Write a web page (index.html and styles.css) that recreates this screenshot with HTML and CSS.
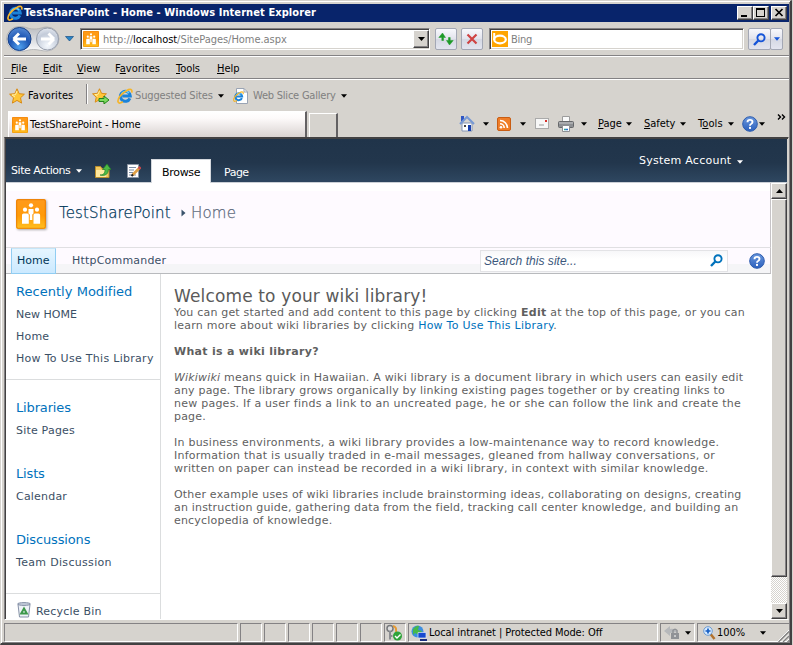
FILE: index.html
```html
<!DOCTYPE html>
<html lang="en">
<head>
<meta charset="utf-8">
<title>TestSharePoint - Home</title>
<link rel="stylesheet" href="styles.css">
</head>
<body>
<svg class="defs" width="0" height="0" aria-hidden="true">
  <defs>
    <linearGradient id="orange" x1="0" y1="0" x2="0" y2="1"><stop offset="0" stop-color="#ff9a1c"/><stop offset=".55" stop-color="#ff9a08"/><stop offset="1" stop-color="#ffc222"/></linearGradient>
    <radialGradient id="blueball" cx=".5" cy=".85" r=".9"><stop offset="0" stop-color="#4fa0ee"/><stop offset=".5" stop-color="#1f57b4"/><stop offset="1" stop-color="#5b8fd8"/></radialGradient>
    <radialGradient id="greyball" cx=".5" cy=".8" r=".9"><stop offset="0" stop-color="#f4f8fd"/><stop offset=".6" stop-color="#c3cbd9"/><stop offset="1" stop-color="#eef2f8"/></radialGradient>
    <linearGradient id="help" x1="0" y1="0" x2="0" y2="1"><stop offset="0" stop-color="#6a97dd"/><stop offset="1" stop-color="#2b60bd"/></linearGradient>
    <linearGradient id="bar" x1="0" y1="0" x2="0" y2="1"><stop offset="0" stop-color="#b9bbbf"/><stop offset=".5" stop-color="#d8dade"/><stop offset="1" stop-color="#fbfbfc"/></linearGradient>
    <symbol id="people" viewBox="0 0 30 30">
      <rect x="0" y="0" width="30" height="30" rx="2" fill="url(#orange)"/>
      <rect x=".7" y=".7" width="28.6" height="28.6" rx="1.5" fill="none" stroke="#e87c05" stroke-width=".9"/>
      <g fill="#fff"><circle cx="15" cy="6.3" r="2.1"/><circle cx="9" cy="10.7" r="2.1"/><circle cx="21" cy="10.7" r="2.1"/>
      <path d="M6 16q0-1.600 1.500-1.600h3.700q1.600 0 1.600 1.600v8.700H6zM17.500 16q0-1.600 1.500-1.600h3.500q1.600 0 1.600 1.600v8.700h-6.600zM12.500 10h5v4.500l-1.200 1v5.500h-2.500v-5.500l-1.300-1z"/></g>
    </symbol>
    <symbol id="ie" viewBox="0 0 16 16">
      <path d="M12.900 10.300A5 5 0 1 1 13.300 8H5.200" fill="none" stroke="#1b83da" stroke-width="3"/>
      <path d="M4.400 6A4.400 4.400 0 0 1 12 5" fill="none" stroke="#6fd0f8" stroke-width="1.300"/>
      <path d="M14.600 4.600C15.700 1.500 13.500.2 9.500 2.700 4.500 5.500-.2 11 1.200 14.200c.8 1.500 3 .7 4.600-.4" fill="none" stroke="#f5b52a" stroke-width="1.700"/>
    </symbol>
    <symbol id="star" viewBox="0 0 16 16"><path d="M8 .8l2.200 4.900 5.200.5-3.900 3.600 1.100 5.300L8 12.400l-4.600 2.700 1.100-5.300L.6 6.200l5.200-.5z" fill="#ffc637" stroke="#d88a16"/><path d="M8 3L6.500 6.700 3 7l3 2" fill="none" stroke="#fff1a8"/></symbol>
    <symbol id="down" viewBox="0 0 7 4"><path d="M0 0h7L3.500 4z" fill="currentColor"/></symbol>
    <symbol id="question" viewBox="0 0 16 16"><circle cx="8" cy="8" r="7.300" fill="url(#help)" stroke="#2d5cae"/><path d="M5.500 6.200q0-2.300 2.500-2.300t2.500 2.100q0 1.200-1.400 2Q8 8.500 8 9.800" fill="none" stroke="#fff" stroke-width="1.900"/><rect x="7" y="10.900" width="2" height="2" fill="#fff"/></symbol>
    <symbol id="lens" viewBox="0 0 13 13"><circle cx="8" cy="4.800" r="3.600" fill="none" stroke="currentColor" stroke-width="1.900"/><path d="M5.300 7.500L1 12" stroke="currentColor" stroke-width="2.400"/></symbol>
  </defs>
</svg>

<div class="window">
  <header class="titlebar">
    <svg class="title-icon" width="16" height="16"><use href="#ie"/></svg>
    <h1 class="title-text">TestSharePoint - Home - Windows Internet Explorer</h1>
    <div class="window-buttons">
      <span class="button3d"><svg width="12" height="10"><path d="M2 7h6v2H2z"/></svg></span>
      <span class="button3d"><svg width="12" height="10"><path d="M1 0h9v9H1zM2 2v6h7V2z" fill-rule="evenodd"/></svg></span>
      <span class="button3d close"><svg width="12" height="10"><path d="M2.500 1l7 7M9.500 1l-7 7" stroke="#000" stroke-width="1.700"/></svg></span>
    </div>
  </header>

  <div class="navbar">
    <svg class="travel" width="59" height="28" viewBox="0 0 59 28">
      <path d="M14 1.500C22 1.500 22 4 29 4S37 2 42 2a12 12 0 0 1 0 24c-6 0-8-1.500-13.500-1.500S21 26.500 14 26.500a12.500 12.500 0 0 1 0-25z" fill="url(#bar)" stroke="#a9abad" stroke-width=".8"/>
      <circle cx="14.500" cy="14" r="11.500" fill="url(#blueball)" stroke="#163f86"/>
      <path d="M8.500 14l5.500-5.500M8.500 14l5.500 5.500M9 14h12" stroke="#fff" stroke-width="2.900" fill="none"/>
      <circle cx="42.500" cy="14" r="11" fill="url(#greyball)" stroke="#969dab"/>
      <path d="M49 14l-5.500-5.500M49 14l-5.500 5.500M48.500 14H36" stroke="#fff" stroke-width="2.900" fill="none"/>
    </svg>
    <svg class="recent" width="9" height="6"><path d="M.5.5h8L4.500 5z" fill="#2a86c8" stroke="#174f86" stroke-width=".7"/></svg>
    <div class="field address">
      <svg width="16" height="16"><use href="#people"/></svg>
      <span class="url">http://<b>localhost</b>/SitePages/Home.aspx</span>
      <span class="button3d combo"><svg width="7" height="4"><use href="#down"/></svg></span>
    </div>
    <span class="toolbutton refresh"><svg width="16" height="14" viewBox="0 0 16 14"><path d="M.8 5.500L4.500 1l3 4.500H5.500v3H3.800v-3zM15.200 8.500L11.500 13l-3-4.500h2v-3h1.700v3z" fill="#1d9a27" stroke="#1d9a27" stroke-width=".5"/><path d="M4.600 6.500q0-3.500 3.400-4M11.400 7.500q0 3.500-3.400 4" fill="none"/></svg></span>
    <span class="toolbutton stop"><svg width="12" height="12"><path d="M1.500 1.500l9 9M10.500 1.500l-9 9" stroke="#cf4343" stroke-width="2.200"/></svg></span>
    <div class="field bing">
      <svg width="16" height="16"><rect width="16" height="16" fill="#ffa500"/><path d="M2.200 2v7" stroke="#fff" stroke-width="2"/><ellipse cx="8" cy="8.500" rx="5.800" ry="3.800" fill="none" stroke="#fff" stroke-width="2.200"/></svg>
      <span>Bing</span>
    </div>
    <span class="toolbutton search-go"><svg width="13" height="13"><use href="#lens"/></svg></span>
    <span class="toolbutton search-menu"><svg width="6" height="4"><use href="#down"/></svg></span>
  </div>

  <nav class="menubar">
    <span class="m-file"><u>F</u>ile</span><span class="m-edit"><u>E</u>dit</span><span class="m-view"><u>V</u>iew</span><span class="m-fav">F<u>a</u>vorites</span><span class="m-tools"><u>T</u>ools</span><span class="m-help"><u>H</u>elp</span>
  </nav>

  <div class="favbar">
    <svg class="fav-star" width="16" height="16"><use href="#star"/></svg>
    <span class="fav-label">Favorites</span>
    <i class="divider"></i>
    <svg class="fav-add" width="18" height="16"><use href="#star" width="15" height="15"/><path d="M7 10.500h5V8l5 4-5 4v-2.500H7z" fill="#7ddb5e" stroke="#23851c"/></svg>
    <svg class="fav-ie" width="16" height="16"><use href="#ie"/></svg>
    <span class="fav-link suggested">Suggested Sites</span>
    <svg class="fav-down" width="6" height="4"><use href="#down"/></svg>
    <svg class="fav-page" width="16" height="16"><path d="M3.500.500H11L14.500 4v11.500h-11z" fill="#fff" stroke="#9aa4b4"/><path d="M11 .500V4h3.500" fill="none" stroke="#9aa4b4"/><use href="#ie" x="0" y="3" width="11" height="11"/></svg>
    <span class="fav-link slices">Web Slice Gallery</span>
    <svg class="fav-down" width="6" height="4"><use href="#down"/></svg>
  </div>

  <div class="tabbar">
    <div class="tab"><svg width="16" height="16"><use href="#people"/></svg><span>TestSharePoint - Home</span></div>
    <div class="newtab"></div>
    <div class="commands">
      <svg class="c-home" width="16" height="17"><path d="M3 8h10v8H3z" fill="#fff" stroke="#8696b4"/><path d="M2 1h3v4L2 7z" fill="#2f55c4"/><path d="M1 9l7-7 7 7" fill="none" stroke="#7799d4" stroke-width="2"/><path d="M9 10h3v6H9z" fill="#173fae"/><path d="M5 10h2v2H5z" fill="#444"/></svg>
      <svg class="c-down d1" width="6" height="4"><use href="#down"/></svg>
      <svg class="c-rss" width="14" height="14"><rect x=".5" y=".5" width="13" height="13" rx="1.500" fill="#ef7d28" stroke="#c95d13"/><g fill="none" stroke="#fff" stroke-width="1.600"><path d="M3 6.800a4.200 4.200 0 0 1 4.200 4.200M3 3.500a7.500 7.500 0 0 1 7.500 7.500"/></g><circle cx="4" cy="10.200" r="1.300" fill="#fff"/></svg>
      <svg class="c-down d2" width="6" height="4"><use href="#down"/></svg>
      <svg class="c-mail" width="14" height="11"><rect x=".5" y=".5" width="13" height="10" fill="#f7f7f7" stroke="#aaa"/><path d="M10 2h2v2h-2z" fill="#d8322c"/><path d="M4 7h5" stroke="#999"/></svg>
      <svg class="c-print" width="16" height="16"><path d="M4.500.500h7V6h-7z" fill="#fafafa" stroke="#9c9c9c"/><rect x=".5" y="5.500" width="15" height="6" rx="1" fill="#8d8f93" stroke="#66686b"/><path d="M1 7h14" stroke="#c8c9cb"/><path d="M4.500 9.500h7v6h-7z" fill="#fff" stroke="#8d8f93"/><path d="M6 13.500h2" stroke="#2fa5a0" stroke-width="1.500"/><path d="M8 13.500h2" stroke="#2b6fd4" stroke-width="1.500"/></svg>
      <svg class="c-down d3" width="6" height="4"><use href="#down"/></svg>
      <span class="c-page"><u>P</u>age</span><svg class="c-down" width="6" height="4"><use href="#down"/></svg>
      <span class="c-safety"><u>S</u>afety</span><svg class="c-down" width="6" height="4"><use href="#down"/></svg>
      <span class="c-tools">T<u>o</u>ols</span><svg class="c-down" width="6" height="4"><use href="#down"/></svg>
      <svg class="c-help" width="16" height="16"><use href="#question"/></svg><svg class="c-down d4" width="6" height="4"><use href="#down"/></svg>
      <svg class="c-more" width="9" height="6"><path d="M1 .500l2.500 2.500L1 5.500M5 .500l2.500 2.500L5 5.500" fill="none" stroke="#000" stroke-width="1.400"/></svg>
    </div>
  </div>

  <div class="viewport">
    <div class="ribbon">
      <span class="site-actions">Site Actions</span>
      <svg class="sa-down" width="6" height="4"><use href="#down"/></svg>
      <svg class="r-up" width="16" height="15"><path d="M.500 3.500h5l1.500 2h7v9H.500z" fill="#f3ca62" stroke="#b98e2c"/><path d="M1 7h11l-1 7H1z" fill="#ffe9a0"/><path d="M5 12c4 0 5-2.500 5-5.500H7.500l4.500-5.500 4 5.500h-2.700c0 4-2.300 7-8.300 5.500z" fill="#4db944" stroke="#20802a" stroke-width=".7"/></svg>
      <svg class="r-edit" width="14" height="14"><path d="M.500.500h11v13H.500z" fill="#fff" stroke="#8c96a5"/><path d="M2 3.500h7M2 6h5M2 8.500h4M2 11h7" stroke="#7c8ca4"/><path d="M5.500 11L13 3.500" stroke="#e0a045" stroke-width="2.600"/><path d="M11.700 4.800L13.500 3" stroke="#c9474d" stroke-width="2.600"/><path d="M4.500 12l1.500-1.500" stroke="#222" stroke-width="2"/></svg>
      <span class="ribbon-tab">Browse</span>
      <span class="ribbon-page">Page</span>
      <span class="account">System Account</span>
      <svg class="acc-down" width="6" height="4"><use href="#down"/></svg>
    </div>
    <div class="scroller">
      <div class="page">
        <div class="site-title">
          <svg class="logo" width="30" height="30"><use href="#people"/></svg>
          <span class="site-name">TestSharePoint</span>
          <svg class="crumb" width="5" height="8"><path d="M.500.500l4 3.500-4 3.500z" fill="#3a536c"/></svg>
          <span class="page-name">Home</span>
        </div>
        <nav class="topnav">
          <a class="home">Home</a>
          <a class="commander">HttpCommander</a>
          <div class="sitesearch"><span>Search this site...</span><svg width="13" height="13"><use href="#lens"/></svg></div>
          <svg class="page-help" width="16" height="16"><use href="#question"/></svg>
        </nav>
        <div class="body">
          <aside class="sidebar">
            <section class="recent-list">
              <h3 class="wide">Recently Modified</h3>
              <a class="new">New HOME</a><a>Home</a><a class="howto">How To Use This Library</a>
            </section>
            <section class="group"><h3>Libraries</h3><a>Site Pages</a></section>
            <section class="group"><h3>Lists</h3><a>Calendar</a></section>
            <section class="group"><h3>Discussions</h3><a class="team">Team Discussion</a></section>
            <div class="recycle">
              <svg width="16" height="16"><path d="M2 2.500l1.500 12.500h9L14 2.500z" fill="#eef2f7" stroke="#8792a8"/><ellipse cx="8" cy="2" rx="6.500" ry="1.400" fill="#c4ccda" stroke="#8691a7"/><path d="M8 6.500l2.800 5H5.200z" fill="none" stroke="#3d984a" stroke-width="2"/></svg>
              <a>Recycle Bin</a>
            </div>
          </aside>
          <main class="content">
            <h2>Welcome to your wiki library!</h2>
            <p>You can get started and add content to this page by clicking <strong>Edit</strong> at the top of this page, or you can<br><span class="loose">learn more about wiki libraries by clicking <a>How To Use This Library</a>.</span></p>
            <p><strong>What is a wiki library?</strong></p>
            <p><em>Wikiwiki</em> means quick in Hawaiian. A wiki library is a document library in which users can easily edit<br>any page. The library grows organically by linking existing pages together or by creating links to<br><span class="loose">new pages. If a user finds a link to an uncreated page, he or she can follow the link and create the</span><br>page.</p>
            <p class="loose">In business environments, a wiki library provides a low-maintenance way to record knowledge.<br>Information that is usually traded in e-mail messages, gleaned from hallway conversations, or<br>written on paper can instead be recorded in a wiki library, in context with similar knowledge.</p>
            <p>Other example uses of wiki libraries include brainstorming ideas, collaborating on designs, creating<br>an instruction guide, gathering data from the field, tracking call center knowledge, and building an<br>encyclopedia of knowledge.</p>
          </main>
        </div>
      </div>
      <div class="scrollbar">
        <span class="button3d sb"><svg width="7" height="4"><path d="M0 4h7L3.500 0z"/></svg></span>
        <span class="button3d thumb"></span>
        <span class="track"></span>
        <span class="button3d sb"><svg width="7" height="4"><use href="#down"/></svg></span>
      </div>
    </div>
  </div>

  <footer class="statusbar">
    <span class="cell message"></span>
    <span class="cell"></span><span class="cell"></span><span class="cell"></span><span class="cell"></span><span class="cell"></span><span class="cell"></span>
    <span class="cell"><svg width="18" height="17"><circle cx="5" cy="4.500" r="3" fill="#ddd" stroke="#77797c" stroke-width="1.500"/><path d="M5 7v8.500M5 12h2.500" stroke="#8b8d91" stroke-width="2"/><path d="M8 2q4 1 3 6" fill="none" stroke="#e69a32" stroke-width="2"/><circle cx="12.500" cy="12" r="4.500" fill="#2fa33a"/><path d="M10 12l2 2 3.500-3.500" fill="none" stroke="#fff" stroke-width="1.400"/></svg></span>
    <span class="cell zone"><svg width="17" height="16"><circle cx="6.500" cy="6.500" r="6" fill="#3d8fe0"/><path d="M2 4q4-4 6-3l-1 4 4 1-3 4-4-2-2 2z" fill="#46b94a"/><path d="M7 7.500h8V13H7z" fill="#174ad0" stroke="#dce5f5" stroke-width=".7"/><path d="M9 15h7" stroke="#1a2e80" stroke-width="2"/></svg><span>Local intranet | Protected Mode: Off</span></span>
    <span class="cell lock"><svg width="17" height="15"><path d="M0 6l6-5v3q5-1 7 3l-7 1v3z" fill="#b6b8bb"/><rect x="7" y="8" width="8" height="6" fill="#909296"/><path d="M9 8V5.500q2-2.500 4 0V8" fill="none" stroke="#909296" stroke-width="1.500"/><path d="M11 10v2" stroke="#fff"/></svg><svg class="st-down" width="6" height="4"><use href="#down"/></svg></span>
    <span class="cell zoom"><svg width="13" height="14"><path d="M7.500 8l4 5" stroke="#b3722d" stroke-width="2.500"/><circle cx="5" cy="5" r="4.300" fill="#d8ebff" stroke="#6b9ad0"/><path d="M5 2.500v5M2.500 5h5" stroke="#145ec4" stroke-width="1.700"/></svg><span>100%</span><svg class="st-down" width="6" height="4"><use href="#down"/></svg><svg class="grip" width="12" height="12"><path d="M0 12L12 0M4.500 12L12 4.500M9 12l3-3" stroke="#fff"/><path d="M1.500 12L12 1.500M6 12l6-6M10.500 12l1.500-1.500" stroke="#808080" stroke-width="1.300"/></svg></span>
  </footer>
</div>
</body>
</html>
```
FILE: styles.css
```css
* { box-sizing: border-box; }
html, body { margin: 0; width: 793px; height: 645px; overflow: hidden; }
body { background: #d6d3ce; }
.defs { position: absolute; }
svg { flex: none; display: block; }
h1, h2, h3, p { margin: 0; font-weight: normal; }
u { text-underline-offset: 1px; }

.window {
  width: 792px; height: 645px;
  display: flex; flex-direction: column;
  padding: 2px 0 0 3px;
  border: solid; border-width: 1px 2px 2px 1px;
  border-color: #d6d3ce #424142 #424142 #d6d3ce;
  box-shadow: inset 1px 1px #fff, inset -1px -1px #848284;
  font: 11px/14px "DejaVu Sans Condensed", "DejaVu Sans", sans-serif;
  letter-spacing: -.25px;
  color: #000;
}
.window > * { flex: none; width: 785px; }
.window span { white-space: nowrap; }

.button3d {
  display: flex; align-items: center; justify-content: center;
  background: #d6d3ce; color: #000;
  border: 1px solid; border-color: #fff #424142 #424142 #fff;
  box-shadow: inset -1px -1px #848284;
}

/* title bar */
.titlebar { height: 18px; margin-top: 1px; display: flex; align-items: center; background: #08246b; color: #fff; padding-left: 3px; }
.title-text { margin-left: 1px; width: 640px; font: bold 11px/14px "DejaVu Sans Condensed", sans-serif; letter-spacing: .08px; white-space: nowrap; }
.window-buttons { display: flex; margin-left: auto; margin-right: 2px; }
.window-buttons .button3d { width: 16px; height: 14px; }
.window-buttons .close { margin-left: 2px; }

/* address row */
.navbar { height: 33px; padding-top: 1px; display: flex; align-items: center; }
.travel { margin-left: 1px; }
.recent { margin-left: 1px; margin-right: 1px; }
.field { height: 22px; flex: none; display: flex; align-items: center; background: #fff; border: 1px solid; border-color: #848284 #fff #fff #848284; box-shadow: inset 1px 1px #424142, inset -1px -1px #d6d3ce; color: #808080; padding-left: 2px; }
.address { margin-left: 5px; width: 350px; }
.url { margin: 2px 0 0 4px; width: 310px; letter-spacing: -.04px; }
.url b { font-weight: normal; color: #000; }
.combo { width: 16px; height: 18px; }
.toolbutton { flex: none; display: flex; align-items: center; justify-content: center; width: 22px; height: 22px; border: 1px solid #a3a7b4; border-radius: 2px; background: linear-gradient(#f8f8fc, #e2e3ec 50%, #d5d8e3 51%, #e3e5ef); }
.refresh { margin-left: 5px; }
.stop { margin-left: 4px; }
.bing { margin-left: 6px; width: 255px; }
.bing span { margin: 2px 0 0 3px; }
.search-go { margin-left: 4px; color: #1554d8; width: 23px; }
.search-menu { width: 13px; margin-left: -1px; color: #1554d8; }

/* menu */
.menubar { height: 24px; display: flex; align-items: center; padding: 3px 0 0 7px; letter-spacing: -.05px; border-top: 1px solid #848284; border-bottom: 1px solid #848284; box-shadow: inset 0 1px #fff, 0 1px #fff; }
.m-file { width: 32px; } .m-edit { width: 34px; } .m-view { width: 38px; }
.m-fav { width: 61px; letter-spacing: .05px; } .m-tools { width: 41px; }

/* favourites */
.favbar { height: 31px; display: flex; align-items: center; padding-top: 3px; padding-left: 5px; }
.fav-label { margin-left: 3px; width: 55px; letter-spacing: .08px; }
.divider { width: 2px; height: 20px; border-left: 1px solid #848284; border-right: 1px solid #fff; margin: -5px 4px 0 3px; }
.fav-ie { margin-left: 7px; }
.fav-link { color: #808080; }
.suggested { width: 82px; margin-left: 2px; letter-spacing: -.15px; }
.fav-page { margin-left: 9px; }
.slices { width: 87px; margin-left: 4px; letter-spacing: -.22px; }
.fav-down { margin-left: 1px; }

/* tabs */
.tabbar { height: 27px; display: flex; align-items: flex-end; padding-left: 4px; }
.tab { flex: none; width: 299px; height: 26px; display: flex; align-items: center; padding-left: 3px; border-top: 1px solid #fff; border-left: 1px solid #fff; border-right: 2px solid #636163; background: linear-gradient(#fff, #fdfafa 25%, #d9d3d1); }
.tab span { margin: 1px 0 0 2px; letter-spacing: -.04px; }
.newtab { flex: none; width: 29px; height: 24px; margin-left: 2px; border: 1px solid #fff; border-right: 2px solid #636163; border-bottom: 0; }
.commands { align-self: center; height: 22px; display: flex; align-items: center; margin-left: 121px; }
.commands > * { flex: none; }
.d1 { margin: 0 8px; } .d2 { margin: 0 9px; }
.c-print { margin-left: 9px; }
.d3 { margin: 0 11px 0 7px; }
.c-page { width: 28px; } .c-safety { width: 36px; margin-left: 12px; } .c-tools { width: 30px; margin-left: 12px; letter-spacing: .1px; }
.c-page, .c-safety { letter-spacing: -.05px; }
.c-help { margin-left: 8px; }
.d4 { margin-left: 1px; }
.c-more { margin: -14px 0 0 12px; }

/* browser viewport */
.viewport { height: 483px; width: 785px; border: 1px solid; border-color: #424142 #d6d3ce #fff #848284; box-shadow: inset 1px 1px #424142; padding: 1px 1px 1px 1px; font-family: "DejaVu Sans", sans-serif; letter-spacing: 0; }
.ribbon { height: 44px; display: flex; align-items: center; background: linear-gradient(#20344a, #22364c 55%, #2d455e 95%); border-bottom: 1px solid #cbd0d6; color: #fff; }
.ribbon > * { flex: none; }
.site-actions { width: 65px; margin: 20px 0 0 5px; letter-spacing: -.45px; }
.sa-down { margin: 20px 0 0 0; }
.r-up { margin: 20px 0 0 13px; }
.r-edit { margin: 20px 0 0 16px; }
.ribbon-tab { align-self: flex-end; width: 60px; height: 24px; margin: 0 0 -1px 10px; padding: 6px 0 0 10px; background: #fff; border: 1px solid #d4d8dd; border-bottom: 0; color: #000; letter-spacing: -.3px; }
.ribbon-page { width: 415px; margin: 25px 0 0 13px; letter-spacing: -.5px; }
.account { width: 98px; letter-spacing: .25px; margin-top: 1px; }
.acc-down { margin-top: 2px; }

.scroller { display: flex; height: 436px; }
.page { width: 765px; height: 436px; overflow: hidden; background: #fff; }
.site-title { height: 65px; display: flex; align-items: flex-start; padding: 15px 0 0 10px; background: linear-gradient(#fff 8px, #fefaff 8px); border-bottom: 1px solid #e0dfe2; border-right: 1px solid #c6c3c6; font-size: 15px; font-weight: 200; line-height: 20px; }
.logo { margin-top: 1px; filter: drop-shadow(1px 1px 1px #aaa); }
.site-name { width: 122px; margin: 5px 0 0 13px; color: #003759; letter-spacing: .12px; -webkit-text-stroke: .25px #003759; }
.crumb { margin-top: 11px; }
.page-name { margin: 5px 0 0 5px; color: #5e6b7d; letter-spacing: .2px; -webkit-text-stroke: .25px #5e6b7d; }
.topnav { height: 26px; display: flex; align-items: center; padding-left: 5px; background: linear-gradient(#fefaff 16px, #f5f5f7 16px); border-bottom: 1px solid #b8babd; border-right: 1px solid #c6c3c6; }
.topnav > * { flex: none; }
.topnav a { color: #3b4f65; }
.topnav .home { width: 45px; height: 26px; margin-bottom: -1px; padding: 5px 0 0 5px; color: #003759; background: linear-gradient(#e6f5ff, #cbe9ff); border: 1px solid #91cdf2; border-top-color: #c6e5f8; }
.topnav .commander { width: 408px; margin-left: 16px; letter-spacing: .2px; }
.sitesearch { width: 248px; height: 22px; display: flex; align-items: center; background: linear-gradient(#f7f7f9, #fff 8px); border: 1px solid #e3e3e6; color: #3c587c; padding: 0 4px 0 3px; justify-content: space-between; font: italic 12px/14px "Liberation Sans", sans-serif; letter-spacing: .04px; }
.sitesearch svg { color: #0072bc; }
.page-help { margin-left: 21px; }

.body { display: flex; height: 346px; }
.sidebar { width: 155px; border-right: 1px solid #dbddde; color: #3b4f65; }
.sidebar h3 { font-size: 13px; line-height: 18px; color: #0072bc; letter-spacing: -.15px; }
.sidebar h3.wide { letter-spacing: .03px; }
.sidebar a { display: block; line-height: 14px; margin-top: 8px; letter-spacing: .2px; }
.sidebar h3 + a { margin-top: 7px; }
.sidebar .new { letter-spacing: 0; }
.sidebar .howto { letter-spacing: .29px; }
.sidebar .team { letter-spacing: .32px; }
.recent-list { height: 106px; padding: 9px 0 0 10px; border-bottom: 1px solid #dbddde; }
.group { height: 66px; padding: 19px 0 0 10px; }
.recycle { height: 30px; margin-top: 15px; border-top: 1px solid #dbddde; padding: 8px 0 0 10px; display: flex; }
.sidebar .recycle a { margin: 3px 0 0 4px; }

.content { padding: 13px 0 0 13px; color: #5f5f5f; font-size: 11px; line-height: 13px; white-space: nowrap; letter-spacing: .19px; }
.content h2 { font-size: 17px; line-height: 19px; color: #5a5a5a; letter-spacing: .14px; }
.content p { margin-bottom: 13px; }
.content a { color: #0072bc; }
.content strong { letter-spacing: .3px; }
.content .loose { letter-spacing: .24px; }

.scrollbar { width: 16px; height: 436px; display: flex; flex-direction: column; }
.sb { height: 16px; flex: none; }
.thumb { height: 378px; flex: none; }
.track { flex: 1; background: repeating-conic-gradient(#fff 0 25%, #d6d3ce 0 50%) 0 0 / 2px 2px; }

/* status bar */
.statusbar { height: 20px; margin-top: 3px; display: flex; gap: 2px; }
.cell { width: 22px; height: 19px; flex: none; display: flex; align-items: center; border: 1px solid; border-color: #848284 #fff #fff #848284; }
.message { width: 234px; }
.zone { width: 250px; padding-left: 2px; letter-spacing: -.08px; }
.zone span { margin-left: 1px; }
.lock { width: 35px; padding-left: 3px; }
.st-down { margin-left: 4px; }
.zoom { width: 92px; padding-left: 5px; border-right: 0; }
.zoom span { width: 38px; margin-left: 1px; letter-spacing: -.05px; }
.zoom .st-down { margin-left: 7px; }
.zoom .grip { margin: 6px 0 0 11px; }
```
